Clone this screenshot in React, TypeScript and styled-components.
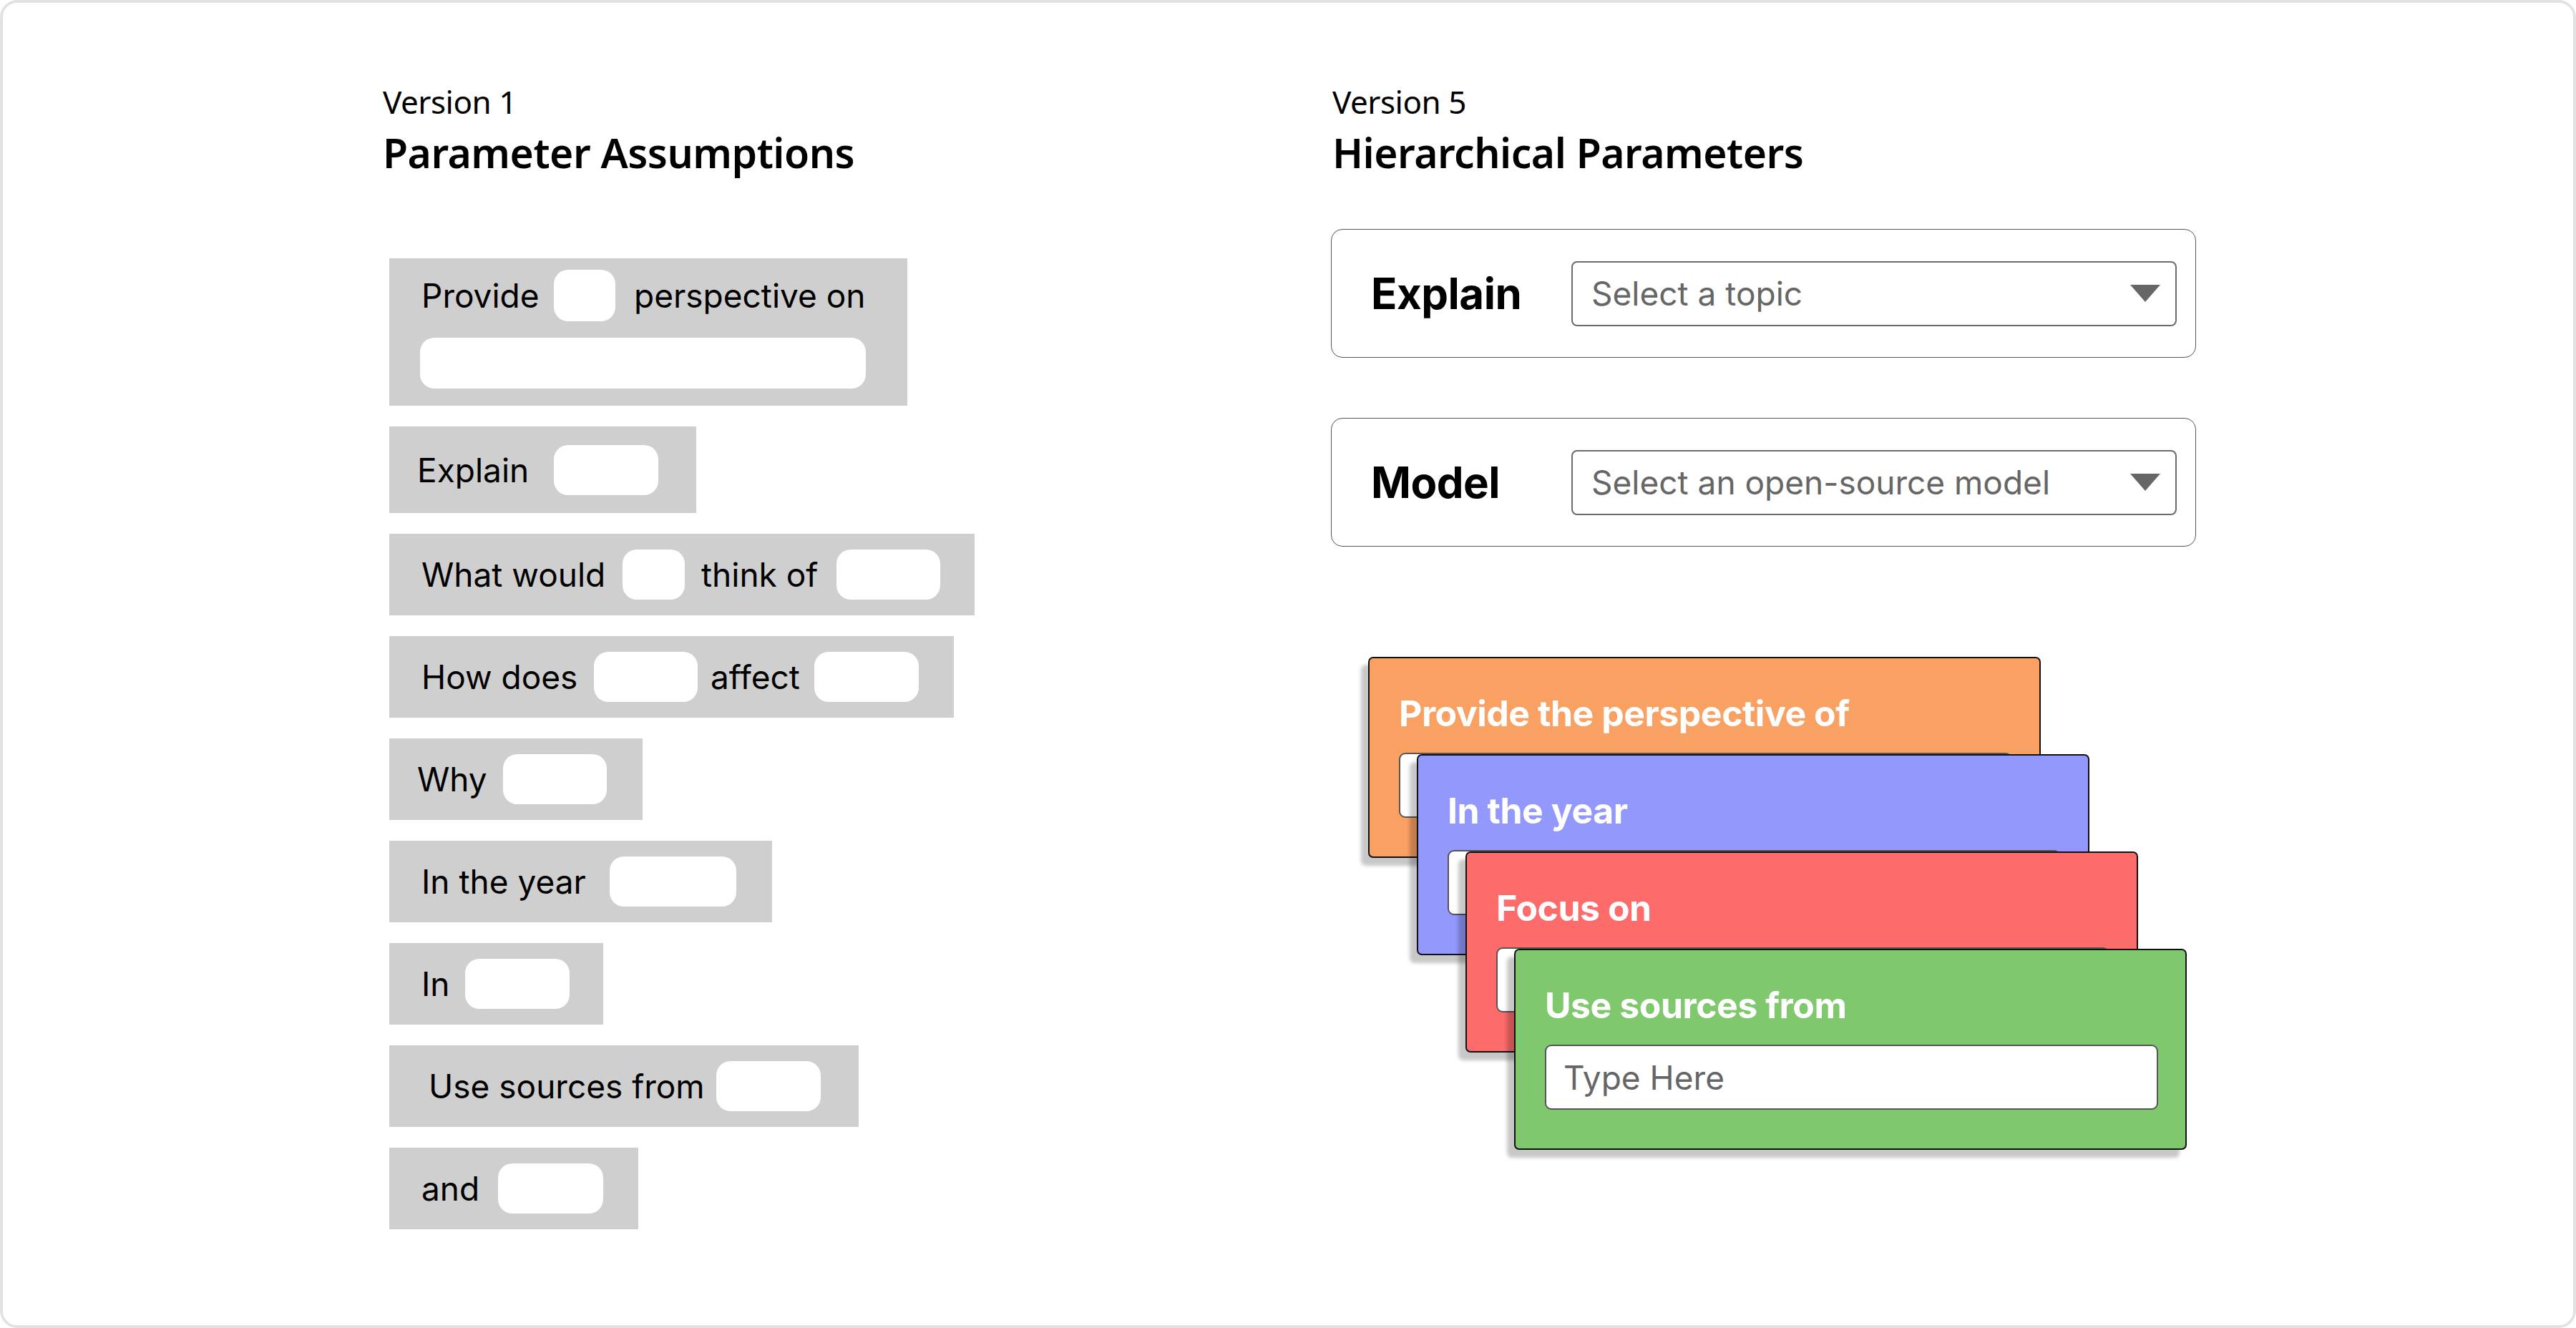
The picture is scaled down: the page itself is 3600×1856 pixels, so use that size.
import React from 'react';
import styled, { createGlobalStyle } from 'styled-components';

const GlobalStyle = createGlobalStyle`
  * { box-sizing: border-box; }
  html, body { margin: 0; padding: 0; background: #fff; }
  body { font-family: "Inter", "Noto Sans", sans-serif; color: #000; }
`;

const Frame = styled.div`
  width: 3600px;
  height: 1856px;
  border: 4px solid #e3e3e3;
  border-radius: 24px;
  background: #fff;
  display: flex;
  padding: 112px 0 0 531px;
`;

const LeftCol = styled.div`
  width: 1325px;
  display: flex;
  flex-direction: column;
`;

const RightCol = styled.div`
  width: 1209px;
  display: flex;
  flex-direction: column;
`;

const Heading = styled.div<{ $indent?: number }>`
  padding-left: ${p => p.$indent || 0}px;
  font-family: "Noto Sans", sans-serif;
  height: 131px;
`;

const Version = styled.div`
  font-size: 44px;
  line-height: 52px;
  letter-spacing: -0.5px;
`;

const Title = styled.h1`
  margin: 12px 0 0;
  font-size: 57px;
  font-weight: 600;
  line-height: 67px;
  letter-spacing: -0.5px;
`;

const BlockList = styled.div`
  margin: 114px 0 0 9px;
  display: flex;
  flex-direction: column;
  align-items: flex-start;
  gap: 29px;
`;

const Block = styled.div<{ $w: number; $h?: number; $pl: number }>`
  width: ${p => p.$w}px;
  height: ${p => p.$h || 114}px;
  padding-left: ${p => p.$pl}px;
  background: #cfcfcf;
  display: flex;
  align-items: center;
  font-size: 46px;
  font-family: "Inter", sans-serif;
`;

const TallBlock = styled(Block)`
  flex-direction: column;
  align-items: flex-start;
  padding-top: 16px;
`;

const Line = styled.div`
  display: flex;
  align-items: center;
`;

const Word = styled.span<{ $w?: number; $ml?: number }>`
  flex: none;
  white-space: nowrap;
  width: ${p => (p.$w ? `${p.$w}px` : 'auto')};
  margin-left: ${p => p.$ml || 0}px;
`;

const Pill = styled.span<{ $w: number; $h?: number; $ml?: number; $mt?: number }>`
  flex: none;
  display: block;
  width: ${p => p.$w}px;
  height: ${p => p.$h || 70}px;
  margin-left: ${p => p.$ml || 0}px;
  margin-top: ${p => p.$mt || 0}px;
  background: #fff;
  border-radius: 20px;
`;

const Panel = styled.div<{ $mt: number }>`
  margin-top: ${p => p.$mt}px;
  height: 180px;
  border: 1.5px solid #555;
  border-radius: 16px;
  display: flex;
  align-items: center;
  padding: 0 26px 0 55px;
`;

const PanelLabel = styled.div`
  width: 280px;
  flex: none;
  font-family: "Inter", sans-serif;
  font-size: 60px;
  font-weight: 700;
  letter-spacing: -0.5px;
`;

const Select = styled.div`
  flex: 1;
  height: 91px;
  border: 2px solid #6b6b6b;
  border-radius: 8px;
  display: flex;
  align-items: center;
  justify-content: space-between;
  padding: 0 21px 0 26px;
  font-family: "Inter", sans-serif;
  font-size: 46px;
  color: #666;
`;

const Stack = styled.div`
  margin: 154px 0 0 52px;
  display: grid;
`;

const Card = styled.div<{ $bg: string; $i: number }>`
  grid-area: 1 / 1;
  margin-left: ${p => p.$i * 68}px;
  margin-top: ${p => p.$i * 136}px;
  width: 940px;
  height: 281px;
  background: ${p => p.$bg};
  border: 2px solid #111;
  border-radius: 7px;
  box-shadow: -10px 11px 5px rgba(0, 0, 0, 0.22);
  padding: 48px 38px 0 41px;
`;

const CardTitle = styled.div`
  font-family: "Inter", sans-serif;
  font-size: 50px;
  font-weight: 700;
  line-height: 58px;
  color: #fff;
  letter-spacing: -0.5px;
`;

const CardInput = styled.div`
  margin-top: 26px;
  height: 91px;
  background: #fff;
  border: 2px solid #555;
  border-radius: 9px;
  display: flex;
  align-items: center;
  padding-left: 24px;
  font-family: "Inter", sans-serif;
  font-size: 46px;
  color: #666;
`;

type Part = { text?: string; pill?: number; w?: number; ml?: number };

const blocks: { w: number; h?: number; pl: number; parts: Part[] }[] = [
  { w: 429, h: 121, pl: 39, parts: [{ text: 'Explain', w: 191 }, { pill: 146 }] },
  { w: 818, pl: 45, parts: [{ text: 'What would', w: 281 }, { pill: 87 }, { text: 'think of', w: 189, ml: 23 }, { pill: 145 }] },
  { w: 789, pl: 45, parts: [{ text: 'How does', w: 241 }, { pill: 145 }, { text: 'affect', w: 145, ml: 18 }, { pill: 146 }] },
  { w: 354, pl: 39, parts: [{ text: 'Why', w: 120 }, { pill: 145 }] },
  { w: 535, pl: 45, parts: [{ text: 'In the year', w: 263 }, { pill: 177 }] },
  { w: 299, pl: 45, parts: [{ text: 'In', w: 61 }, { pill: 146 }] },
  { w: 656, pl: 55, parts: [{ text: 'Use sources from', w: 402 }, { pill: 146 }] },
  { w: 348, pl: 45, parts: [{ text: 'and', w: 107 }, { pill: 147 }] },
];

const cards = [
  { title: 'Provide the perspective of', bg: '#f8a163' },
  { title: 'In the year', bg: '#9398fd' },
  { title: 'Focus on', bg: '#fd6b6b' },
  { title: 'Use sources from', bg: '#7fc86e' },
];

const Caret = () => (
  <svg width="42" height="24" viewBox="0 0 42 24">
    <polygon points="0,0 42,0 21,24" fill="#666" />
  </svg>
);

const App: React.FC = () => {
  return (
    <>
      <GlobalStyle />
      <Frame>
        <LeftCol>
          <Heading>
            <Version>Version 1</Version>
            <Title>Parameter Assumptions</Title>
          </Heading>
          <BlockList>
            <TallBlock $w={724} $h={206} $pl={45}>
              <Line>
                <Word $w={185}>Provide</Word>
                <Pill $w={86} $h={72} />
                <Word $ml={26}>perspective on</Word>
              </Line>
              <Pill $w={623} $h={71} $ml={-2} $mt={23} />
            </TallBlock>
            {blocks.map((b, i) => (
              <Block key={i} $w={b.w} $h={b.h} $pl={b.pl}>
                {b.parts.map((p, j) =>
                  p.pill ? (
                    <Pill key={j} $w={p.pill} />
                  ) : (
                    <Word key={j} $w={p.w} $ml={p.ml}>{p.text}</Word>
                  )
                )}
              </Block>
            ))}
          </BlockList>
        </LeftCol>
        <RightCol>
          <Heading $indent={2}>
            <Version>Version 5</Version>
            <Title>Hierarchical Parameters</Title>
          </Heading>
          <Panel $mt={73}>
            <PanelLabel>Explain</PanelLabel>
            <Select>
              <span>Select a topic</span>
              <Caret />
            </Select>
          </Panel>
          <Panel $mt={84}>
            <PanelLabel>Model</PanelLabel>
            <Select>
              <span>Select an open-source model</span>
              <Caret />
            </Select>
          </Panel>
          <Stack>
            {cards.map((c, i) => (
              <Card key={i} $i={i} $bg={c.bg}>
                <CardTitle>{c.title}</CardTitle>
                <CardInput>{i === cards.length - 1 ? 'Type Here' : ''}</CardInput>
              </Card>
            ))}
          </Stack>
        </RightCol>
      </Frame>
    </>
  );
};

export default App;
